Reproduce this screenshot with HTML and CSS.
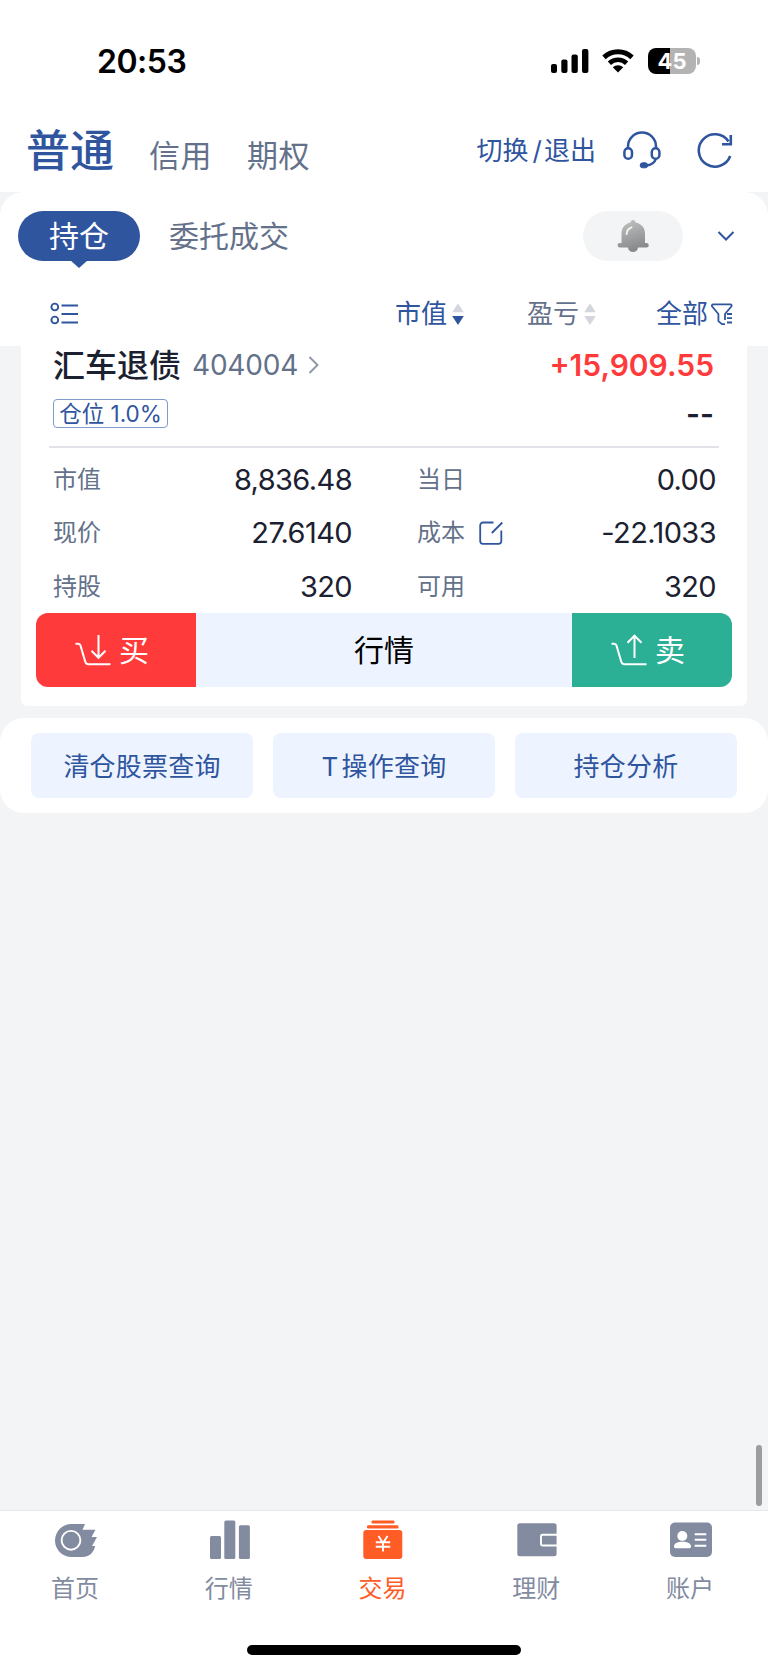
FILE: index.html
```html
<!DOCTYPE html>
<html lang="zh-CN">
<head>
    <meta charset="UTF-8">
    <meta name="viewport" content="width=device-width, initial-scale=1.0">
    <title>持仓</title>
    <link rel="stylesheet" href="styles.css">
</head>
<body>
    <div class="status-bar">
        <div class="time">20:53</div>
        <div class="status-icons">
            <svg class="signal" width="38" height="24" viewBox="0 0 38 24">
                <rect x="0" y="15" width="6" height="9" rx="2"/>
                <rect x="10.3" y="10.5" width="6.2" height="13.5" rx="2"/>
                <rect x="20.5" y="5.5" width="6.3" height="18.5" rx="2"/>
                <rect x="31" y="0" width="6.4" height="24" rx="2"/>
            </svg>
            <svg class="wifi" width="32" height="24" viewBox="0 0 32 24">
                <path d="M2 8.4a20.5 20.5 0 0 1 28 0" fill="none" stroke="#000" stroke-width="5"/>
                <path d="M7.4 14.2a12.6 12.6 0 0 1 17.2 0" fill="none" stroke="#000" stroke-width="4.6"/>
                <path d="M16 23.4l-5.2-5.2a7.6 7.6 0 0 1 10.4 0z"/>
            </svg>
            <div class="battery"><span>45</span></div>
            <div class="battery-cap"></div>
        </div>
    </div>

    <div class="header">
        <div class="accounts">
            <span class="account active">普通</span>
            <span class="account">信用</span>
            <span class="account">期权</span>
        </div>
        <div class="header-tools">
            <span class="switch">切换<i>/</i>退出</span>
            <svg class="headset" width="38" height="38" viewBox="0 0 38 38" fill="none" stroke="#2f559f" stroke-width="2.5">
                <path d="M5 17.5V15.5a14 14 0 0 1 28 0V17.5"/>
                <rect x="1.4" y="17.2" width="7.6" height="10.6" rx="3.8"/>
                <rect x="28.8" y="17.2" width="7.6" height="10.6" rx="3.8"/>
                <path d="M33 27.5c-1.2 4-5 6.6-10 7"/>
                <rect x="17.2" y="31.8" width="7.5" height="5" rx="2.5" fill="#2f559f" stroke-width="1"/>
            </svg>
            <svg class="refresh" width="36" height="36" viewBox="0 0 36 36" fill="none" stroke="#2f559f" stroke-width="2.6">
                <path d="M33.2 24A16.200 16.200 0 1 1 31.500 9.500"/>
                <path d="M33.800 3v9.200H25"/>
            </svg>
        </div>
    </div>

    <div class="main">
        <div class="panel">
            <div class="tabs">
                <div class="tab active">持仓</div>
                <div class="tab">委托成交</div>
                <div class="bell">
                    <svg width="32" height="34" viewBox="0 0 32 34">
                        <defs>
                            <linearGradient id="bellFill" x1="0" y1="0" x2="0.3" y2="1">
                                <stop offset="0" stop-color="#c3c4c6"/>
                                <stop offset="1" stop-color="#88898b"/>
                            </linearGradient>
                        </defs>
                        <path fill="url(#bellFill)" d="M16 1c1.500 0 2.400 1.200 2.500 2.600C24.500 4.800 28 9 28 14.500V24h1.500a2.200 2.200 0 0 1 0 4.500H21a5 4.500 0 0 1-10 0H2.800a2.200 2.200 0 0 1 0-4.500H4.500V14.500C4.500 9 8 4.800 13.500 3.600 13.600 2.200 14.500 1 16 1z"/>
                        <path d="M9.700 15c0-3 2-5.600 4.800-6.600" fill="none" stroke="#f6f1e6" stroke-width="2" stroke-linecap="round"/>
                    </svg>
                </div>
                <svg class="more" width="18" height="12" viewBox="0 0 18 12" fill="none" stroke="#2f559f" stroke-width="2">
                    <path d="M1.500 2l7.500 7.500L16.500 2"/>
                </svg>
            </div>
            <div class="sorts">
                <svg class="list-icon" width="28" height="24" viewBox="0 0 28 24" fill="none" stroke="#2f559f" stroke-width="1.900">
                    <circle cx="4.800" cy="5" r="3.400"/>
                    <circle cx="4.800" cy="18" r="3.400"/>
                    <path d="M11.500 3.500h16.500M11.500 12h16.500M11.500 20.500h16.500"/>
                </svg>
                <div class="sort active">市值
                    <svg width="12" height="24" viewBox="0 0 12 24">
                        <path d="M6 1.200l5.800 9H.2z" fill="#d5d7de"/>
                        <path d="M6 23l5.800-9H.2z" fill="#2f559f"/>
                    </svg>
                </div>
                <div class="sort">盈亏
                    <svg width="12" height="24" viewBox="0 0 12 24">
                        <path d="M6 1.200l5.800 9H.2z" fill="#d5d7de"/>
                        <path d="M6 23l5.800-9H.2z" fill="#d5d7de"/>
                    </svg>
                </div>
                <div class="sort active filter">全部
                    <svg width="22" height="24" viewBox="0 0 22 24" fill="none" stroke="#2f559f" stroke-width="1.800">
                        <path d="M14 22.200H11l-3.600-3V12L1.200 4.500c-.7-1-.2-2.200 1-2.200H19.500c1 0 1.500 1.200.8 2.200L14 12v6"/>
                        <path d="M16 12h5M16 16.200h5M16 20.500h5"/>
                    </svg>
                </div>
            </div>
        </div>

        <div class="card">
            <div class="card-top">
                <span class="name">汇车退债</span>
                <span class="code">404004</span>
                <svg class="go" width="11" height="20" viewBox="0 0 11 20" fill="none" stroke="#8e97a8" stroke-width="1.900">
                    <path d="M1.500 2l8 8-8 8"/>
                </svg>
                <span class="profit">+15,909.55</span>
            </div>
            <div class="card-sub">
                <span class="position">仓位 1.0%</span>
                <span class="rate">--</span>
            </div>
            <div class="details">
                <div class="detail"><span class="label">市值</span><span class="value">8,836.48</span></div>
                <div class="detail"><span class="label">当日</span><span class="value">0.00</span></div>
                <div class="detail"><span class="label">现价</span><span class="value">27.6140</span></div>
                <div class="detail">
                    <span class="label">成本</span>
                    <svg class="edit" width="24" height="24" viewBox="0 0 24 24" fill="none" stroke="#2f559f" stroke-width="1.800">
                        <path d="M14.500 1.500H4a2.800 2.800 0 0 0-2.800 2.800V20A2.800 2.800 0 0 0 4 22.800H19.500A2.800 2.800 0 0 0 22.300 20V9.500"/>
                        <path d="M12.800 12L23.300 1.500"/>
                    </svg>
                    <span class="value">-22.1033</span>
                </div>
                <div class="detail"><span class="label">持股</span><span class="value">320</span></div>
                <div class="detail"><span class="label">可用</span><span class="value">320</span></div>
            </div>
            <div class="actions">
                <div class="action buy">
                    <svg width="36" height="32" viewBox="0 0 36 32" fill="none" stroke="#fff" stroke-width="2">
                        <path d="M.5 9.800H3.200c1.300 0 1.900.5 2.300 1.800L10.200 27.500c.5 1.700 1.200 2.700 3 2.700H35.500"/>
                        <path d="M23.500 1v23M16.500 16.800l7 7 7-7"/>
                    </svg>
                    <span>买</span>
                </div>
                <div class="action quote">行情</div>
                <div class="action sell">
                    <svg width="36" height="32" viewBox="0 0 36 32" fill="none" stroke="#fff" stroke-width="2">
                        <path d="M.5 9.800H3.200c1.300 0 1.900.5 2.300 1.800L10.200 27.500c.5 1.700 1.200 2.700 3 2.700H35.500"/>
                        <path d="M23.500 24V1.500M16.500 8.700l7-7 7 7"/>
                    </svg>
                    <span>卖</span>
                </div>
            </div>
        </div>

        <div class="queries">
            <div class="query">清仓股票查询</div>
            <div class="query"><span class="latin">T</span>操作查询</div>
            <div class="query">持仓分析</div>
        </div>
        <div class="scrollbar"></div>
    </div>

    <div class="tabbar">
        <div class="tabbar-item">
            <svg width="42" height="40" viewBox="0 0 42 40">
                <path fill="#828b9f" d="M16.500 4H30L27.500 9.800H40.500L36.500 17H42L37 26H40.200C38.500 33 34 37 27.500 37H16.500A16.500 16.500 0 0 1 16.500 4z"/>
                <circle cx="16" cy="20.300" r="9.400" fill="none" stroke="#fff" stroke-width="1.900"/>
            </svg>
            <span>首页</span>
        </div>
        <div class="tabbar-item">
            <svg width="40" height="40" viewBox="0 0 40 40" fill="#828b9f">
                <rect x="0" y="16" width="11" height="23" rx="1.500"/>
                <rect x="14.300" y="0.600" width="11" height="38.400" rx="1.500"/>
                <rect x="28.900" y="5.300" width="11" height="33.700" rx="1.500"/>
            </svg>
            <span>行情</span>
        </div>
        <div class="tabbar-item active">
            <svg width="40" height="40" viewBox="0 0 40 40" fill="#ff5c26">
                <rect x="8.500" y="0.500" width="23" height="3" rx="1.300"/>
                <rect x="4" y="5.300" width="31.500" height="3.200" rx="1.300"/>
                <rect x="0.300" y="10" width="39" height="29" rx="3"/>
                <path d="M15.500 16l4.500 7 4.500-7M12.800 22.300h14.400M12.800 26.800h14.400M20 22.500v9" fill="none" stroke="#fff" stroke-width="1.900"/>
            </svg>
            <span>交易</span>
        </div>
        <div class="tabbar-item">
            <svg width="40" height="40" viewBox="0 0 40 40">
                <rect x="0.300" y="3.300" width="39.300" height="33" rx="2.500" fill="#828b9f"/>
                <path d="M40 14.700H25.500a1.500 1.500 0 0 0-1.500 1.500v7.800a1.500 1.500 0 0 0 1.500 1.500H40" fill="none" stroke="#fff" stroke-width="1.900"/>
            </svg>
            <span>理财</span>
        </div>
        <div class="tabbar-item">
            <svg width="44" height="40" viewBox="0 0 44 40">
                <rect x="1" y="2.500" width="42" height="34.500" rx="5" fill="#828b9f"/>
                <circle cx="13.300" cy="16" r="5" fill="#fff"/>
                <path d="M5 26.500c0-3.200 3.500-4.800 8.500-4.800s8.500 1.600 8.500 4.800c0 1-.7 1.700-1.700 1.700H6.700c-1 0-1.700-.7-1.700-1.700z" fill="#fff"/>
                <path d="M25.700 14.200h11.600M25.700 19.700h11.600M25.700 25.800h11.600" stroke="#fff" stroke-width="1.900"/>
            </svg>
            <span>账户</span>
        </div>
    </div>
    <div class="home-indicator"></div>
</body>
</html>
```
FILE: styles.css
```css
* {
    box-sizing: border-box;
}

body {
    margin: 0;
    width: 768px;
    height: 1670px;
    display: flex;
    flex-direction: column;
    overflow: hidden;
    font-family: Inter, "Noto Sans CJK SC", sans-serif;
    line-height: 1;
    color: #1b2130;
    background-color: #fff;
}

svg {
    display: block;
    flex: none;
}

/* Status bar */
.status-bar {
    height: 122px;
    padding: 0 68px 0 97px;
    display: flex;
    justify-content: space-between;
    color: #000;
}

.time {
    margin-top: 46px;
    font-size: 32px;
    font-weight: 600;
    letter-spacing: -0.5px;
}

.status-icons {
    display: flex;
    height: 26px;
    margin-top: 48px;
    align-items: center;
}

.wifi {
    margin: 0 14px 0 13px;
}

.battery {
    width: 48px;
    height: 26px;
    border-radius: 8px;
    background: linear-gradient(to right, #000 46%, #b3b3b3 46%);
    color: #fff;
    font-size: 22px;
    font-weight: 700;
    line-height: 26px;
    text-align: center;
}

.battery-cap {
    width: 3px;
    height: 8px;
    margin-left: 1px;
    border-radius: 0 4px 4px 0;
    background-color: #b3b3b3;
}

/* Header */
.header {
    height: 70px;
    padding: 0 35px 0 26px;
    display: flex;
    justify-content: space-between;
}

.accounts {
    display: flex;
    align-items: baseline;
    gap: 35px;
    padding-top: 7px;
}

.account {
    font-size: 31px;
    letter-spacing: 0.5px;
    color: #64718a;
}

.account.active {
    font-size: 44px;
    font-weight: 500;
    letter-spacing: 0;
    color: #2f559f;
}

.header-tools {
    display: flex;
    height: 56px;
    align-items: center;
}

.switch {
    padding-top: 1px;
    font-size: 26px;
    color: #2f559f;
}

.switch i {
    font-style: normal;
    margin: 0 2px 0 4px;
}

.headset {
    margin: -1px 36px 0 27px;
}

.refresh {
    margin-top: -1px;
}

/* Scrolling area */
.main {
    position: relative;
    height: 1318px;
    background-color: #f3f4f6;
}

.panel {
    height: 154px;
    padding-top: 19px;
    border-radius: 24px 24px 0 0;
    background-color: #fff;
}

.tabs {
    display: flex;
    align-items: center;
    height: 50px;
    padding: 0 33px 0 18px;
}

.tab {
    font-size: 30px;
    color: #64718a;
}

.tab.active {
    position: relative;
    width: 122px;
    height: 50px;
    margin-right: 29px;
    border-radius: 25px;
    background-color: #2f559f;
    color: #fff;
    line-height: 51px;
    text-align: center;
}

/* Little arrow under the active tab */
.tab.active::after {
    content: "";
    position: absolute;
    top: 49px;
    left: 52px;
    border-width: 8px 9px 0 9px;
    border-style: solid;
    border-color: #2f559f transparent transparent transparent;
}

.bell {
    display: flex;
    align-items: center;
    justify-content: center;
    width: 100px;
    height: 50px;
    margin-left: auto;
    border-radius: 25px;
    background-color: #f3f4f6;
}

.more {
    margin-left: 34px;
}

.sorts {
    display: flex;
    align-items: center;
    height: 54px;
    margin-top: 26px;
    padding: 0 35px 0 50px;
}

.sort {
    display: flex;
    align-items: center;
    gap: 5px;
    margin-right: 63px;
    font-size: 26px;
    white-space: nowrap;
    color: #64718a;
}

.sort.active {
    color: #2f559f;
}

.sort:nth-child(3) {
    margin-right: 0;
}

.sort.filter {
    margin: 0 0 0 auto;
    gap: 3px;
}

.list-icon {
    margin-right: 317px;
}

/* Position card */
.card {
    height: 360px;
    margin: 0 21px;
    border-radius: 0 0 6px 6px;
    background-color: #fff;
}

.card-top {
    display: flex;
    align-items: center;
    height: 38px;
    padding: 0 33px 0 32px;
}

.name {
    padding-top: 2px;
    font-size: 32px;
    font-weight: 500;
}

.code {
    margin-left: 11px;
    font-size: 28px;
    letter-spacing: -0.2px;
    color: #64718a;
}

.go {
    margin-left: 10px;
}

.profit {
    margin-left: auto;
    font-size: 30px;
    font-weight: 600;
    color: #ff3a3b;
}

.card-sub {
    display: flex;
    align-items: center;
    justify-content: space-between;
    height: 64px;
    margin: 0 28px;
    padding: 0 5px 4px 4px;
    border-bottom: 2px solid #e1e3e9;
}

.position {
    width: 115px;
    height: 29px;
    border: 1px solid #7f9acb;
    border-radius: 4px;
    font-size: 22.500px;
    line-height: 28px;
    text-align: center;
    color: #2f559f;
    white-space: nowrap;
}

.rate {
    padding-top: 2px;
    font-size: 30px;
    font-weight: 600;
}

.details {
    display: grid;
    grid-template-columns: 299px 299px;
    column-gap: 65px;
    grid-auto-rows: 53.500px;
    padding: 5px 30px 0 32px;
}

.detail {
    display: flex;
    align-items: center;
}

.label {
    font-size: 24px;
    color: #64718a;
}

.edit {
    margin-left: 14px;
}

.value {
    margin-left: auto;
    margin-top: -1px;
    font-size: 29px;
    letter-spacing: -0.6px;
}

.actions {
    display: flex;
    height: 74px;
    margin: -1px 15px 0;
    border-radius: 12px;
    overflow: hidden;
}

.action {
    display: flex;
    align-items: center;
    justify-content: center;
    gap: 8px;
    width: 160px;
    padding-right: 8px;
    font-size: 30px;
    color: #fff;
}

.buy {
    background-color: #ff3a3b;
}

.quote {
    flex: 1;
    padding-right: 0;
    background-color: #edf4ff;
    color: #000;
}

.sell {
    background-color: #2baf95;
}

/* Query shortcuts */
.queries {
    display: flex;
    gap: 20px;
    height: 95px;
    margin-top: 12px;
    padding: 15px 31px;
    border-radius: 24px;
    background-color: #fff;
}

.query {
    display: flex;
    align-items: center;
    justify-content: center;
    flex: 1;
    padding-top: 2px;
    border-radius: 8px;
    background-color: #edf4ff;
    font-size: 26px;
    letter-spacing: 0.2px;
    color: #2f559f;
}

.latin {
    margin-right: 3px;
}

.scrollbar {
    position: absolute;
    right: 6px;
    bottom: 4px;
    width: 6px;
    height: 61px;
    border-radius: 3px;
    background-color: #9c9da0;
}

/* Bottom tab bar */
.tabbar {
    display: flex;
    height: 135px;
    padding-top: 9px;
    margin-left: -1px;
    border-top: 1px solid #e6e7ea;
}

.tabbar-item {
    display: flex;
    flex-direction: column;
    align-items: center;
    gap: 17px;
    flex: 1;
    font-size: 24px;
    color: #828b9f;
}

.tabbar-item.active {
    color: #ff5c26;
}

.tabbar-item span {
    margin-right: 2px;
}

.home-indicator {
    width: 274px;
    height: 10px;
    margin: 0 auto;
    border-radius: 5px;
    background-color: #000;
}
```
